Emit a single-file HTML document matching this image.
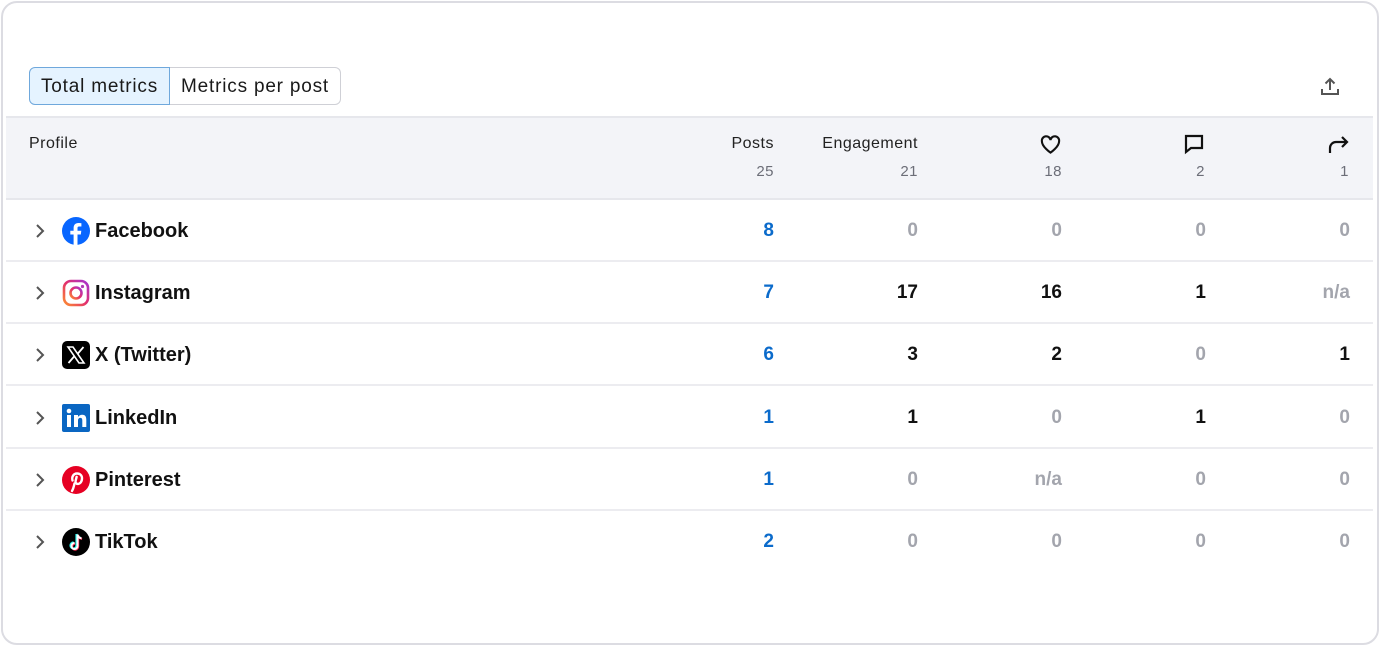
<!DOCTYPE html>
<html><head><style>
*{box-sizing:border-box;margin:0;padding:0}
body{width:1380px;height:646px;background:#fff;font-family:"Liberation Sans",sans-serif;position:relative;overflow:hidden}
.card{position:absolute;left:1px;top:1px;width:1378px;height:644px;border:2px solid #dcdce2;border-radius:16px}
.seg{position:absolute;top:67px;left:29px;height:38px;display:flex;font-size:19px;color:#1a1a1a;letter-spacing:0.8px}
.seg div{border:1px solid #cfd0d6;padding:0 11px;line-height:37px}
.seg .a{background:#e5f3ff;border-color:#6fa8dc;border-radius:6px 0 0 6px}
.seg .b{border-left:none;border-radius:0 6px 6px 0}
.hdr{position:absolute;left:6px;top:116px;width:1367px;height:84px;background:#f3f4f8;border-top:2px solid #e6e7ec;border-bottom:2px solid #e6e7ec}
.t{position:absolute;font-size:16px;color:#222;letter-spacing:0.5px}
.r{text-align:right}
.sub{font-size:15px;color:#6c6e78}
.row{position:absolute;left:6px;width:1367px;height:62px;border-bottom:2px solid #ececf0}
.name{position:absolute;left:89px;font-size:20px;font-weight:bold;color:#111;top:20px}
.chev{position:absolute;left:33px;top:23px}
.ic{position:absolute;left:56px;top:17px;width:28px;height:28px}
.v{position:absolute;top:20px;font-size:19px;font-weight:bold;text-align:right;width:60px}
.bl{color:#0b6bcb}.k{color:#111}.g{color:#a3a5ad}
</style></head><body>
<div class="card"></div>
<div class="seg"><div class="a">Total metrics</div><div class="b">Metrics per post</div></div>
<svg style="position:absolute;left:1319px;top:75px" width="22" height="22" viewBox="0 0 22 22" fill="none" stroke="#555" stroke-width="2"><path d="M11 15V4M6.5 8.5L11 4l4.5 4.5M3 14v5h16v-5"/></svg>
<div class="hdr"></div>
<div class="t" style="left:29px;top:135px">Profile</div>
<div class="t r" style="left:674px;width:100px;top:135px">Posts</div>
<div class="t r sub" style="left:674px;width:100px;top:163px">25</div>
<div class="t r" style="left:778px;width:140px;top:135px">Engagement</div>
<div class="t r sub" style="left:778px;width:140px;top:163px">21</div>
<svg style="position:absolute;left:1039px;top:133px" width="23" height="22" viewBox="0 0 24 22" fill="none" stroke="#111" stroke-width="2.2"><path d="M12 20S3 14 3 8a4.5 4.5 0 0 1 9-1 4.5 4.5 0 0 1 9 1c0 6-9 12-9 12z"/></svg>
<div class="t r sub" style="left:962px;width:100px;top:163px">18</div>
<svg style="position:absolute;left:1183px;top:133px" width="22" height="22" viewBox="0 0 22 22" fill="none" stroke="#111" stroke-width="2.2"><path d="M3 3h16v12H8l-5 4z"/></svg>
<div class="t r sub" style="left:1105px;width:100px;top:163px">2</div>
<svg style="position:absolute;left:1326px;top:133px" width="24" height="22" viewBox="0 0 24 22" fill="none" stroke="#111" stroke-width="2.2"><path d="M4 20v-5a6 6 0 0 1 6-6h11M16 4l5 5-5 5"/></svg>
<div class="t r sub" style="left:1249px;width:100px;top:163px">1</div>

<div class="row" style="top:200px"></div>
<div class="row" style="top:262px"></div>
<div class="row" style="top:324px"></div>
<div class="row" style="top:387px"></div>
<div class="row" style="top:449px"></div>
<div class="row" style="top:511px;border:none"></div>

<div style="position:absolute;top:200px;left:0;width:1380px;height:62px">
<svg class="chev" width="14" height="16" viewBox="0 0 14 16" fill="none" stroke="#555" stroke-width="2"><path d="M4 2l6 6-6 6"/></svg>
<svg class="ic" style="left:62px" viewBox="0 0 28 28"><circle cx="14" cy="14" r="14" fill="#0866ff"/><path d="M15.5 28V17.5h3.3l.5-3.8h-3.8v-2.4c0-1.1.3-1.8 1.900-1.8h2V6.2c-.4 0-1.6-.2-3-.2-2.9 0-4.8 1.8-4.8 5v2.7H8.3v3.8h3.3V28z" fill="#fff"/></svg>
<div class="name" style="left:95px">Facebook</div>
<div class="v bl" style="left:714px">8</div><div class="v g" style="left:858px">0</div><div class="v g" style="left:1002px">0</div><div class="v g" style="left:1146px">0</div><div class="v g" style="left:1290px">0</div>
</div>
<div style="position:absolute;top:262px;left:0;width:1380px;height:62px">
<svg class="chev" width="14" height="16" viewBox="0 0 14 16" fill="none" stroke="#555" stroke-width="2"><path d="M4 2l6 6-6 6"/></svg>
<svg class="ic" style="left:62px" viewBox="0 0 28 28"><defs><linearGradient id="ig" x1="0" y1="1" x2="1" y2="0"><stop offset="0" stop-color="#fd8d32"/><stop offset=".5" stop-color="#e3306c"/><stop offset="1" stop-color="#a534d3"/></linearGradient></defs><rect x="2" y="2" width="24" height="24" rx="7" fill="none" stroke="url(#ig)" stroke-width="2.6"/><circle cx="14" cy="14" r="5.5" fill="none" stroke="url(#ig)" stroke-width="2.6"/><circle cx="20.5" cy="7.5" r="1.6" fill="#b33ab8"/></svg>
<div class="name" style="left:95px">Instagram</div>
<div class="v bl" style="left:714px">7</div><div class="v k" style="left:858px">17</div><div class="v k" style="left:1002px">16</div><div class="v k" style="left:1146px">1</div><div class="v g" style="left:1290px">n/a</div>
</div>
<div style="position:absolute;top:324px;left:0;width:1380px;height:62px">
<svg class="chev" width="14" height="16" viewBox="0 0 14 16" fill="none" stroke="#555" stroke-width="2"><path d="M4 2l6 6-6 6"/></svg>
<svg class="ic" style="left:62px" viewBox="0 0 28 28"><rect width="28" height="28" rx="5" fill="#000"/><path d="M6 6h5l11 16h-5z" fill="none" stroke="#fff" stroke-width="1.6"/><path d="M21.5 6L15.5 13M6.5 22l6-7" stroke="#fff" stroke-width="1.8"/></svg>
<div class="name" style="left:95px">X (Twitter)</div>
<div class="v bl" style="left:714px">6</div><div class="v k" style="left:858px">3</div><div class="v k" style="left:1002px">2</div><div class="v g" style="left:1146px">0</div><div class="v k" style="left:1290px">1</div>
</div>
<div style="position:absolute;top:387px;left:0;width:1380px;height:62px">
<svg class="chev" width="14" height="16" viewBox="0 0 14 16" fill="none" stroke="#555" stroke-width="2"><path d="M4 2l6 6-6 6"/></svg>
<svg class="ic" style="left:62px" viewBox="0 0 28 28"><rect width="28" height="28" rx="2" fill="#0a66c2"/><rect x="5" y="11" width="4" height="12" fill="#fff"/><circle cx="7" cy="7" r="2.3" fill="#fff"/><path d="M12 11h4v2c1-1.5 2.4-2.3 4.3-2.3 3 0 4 2 4 5V23h-4v-6.5c0-1.6-.5-2.6-2-2.6s-2.3 1-2.3 2.6V23h-4z" fill="#fff"/></svg>
<div class="name" style="left:95px">LinkedIn</div>
<div class="v bl" style="left:714px">1</div><div class="v k" style="left:858px">1</div><div class="v g" style="left:1002px">0</div><div class="v k" style="left:1146px">1</div><div class="v g" style="left:1290px">0</div>
</div>
<div style="position:absolute;top:449px;left:0;width:1380px;height:62px">
<svg class="chev" width="14" height="16" viewBox="0 0 14 16" fill="none" stroke="#555" stroke-width="2"><path d="M4 2l6 6-6 6"/></svg>
<svg class="ic" style="left:62px" viewBox="0 0 28 28"><circle cx="14" cy="14" r="14" fill="#e60023"/><path d="M12.5 17.5c-.7 3.3-1.3 5.5-2.5 7.5M10.5 14.5c-1-3.5 1-7 4.5-7 3 0 5 2 5 4.8 0 3.2-1.8 5.6-4.2 5.6-1.6 0-2.6-1.3-2.2-3l1-4" fill="none" stroke="#fff" stroke-width="2.4" stroke-linecap="round"/></svg>
<div class="name" style="left:95px">Pinterest</div>
<div class="v bl" style="left:714px">1</div><div class="v g" style="left:858px">0</div><div class="v g" style="left:1002px">n/a</div><div class="v g" style="left:1146px">0</div><div class="v g" style="left:1290px">0</div>
</div>
<div style="position:absolute;top:511px;left:0;width:1380px;height:62px">
<svg class="chev" width="14" height="16" viewBox="0 0 14 16" fill="none" stroke="#555" stroke-width="2"><path d="M4 2l6 6-6 6"/></svg>
<svg class="ic" style="left:62px" viewBox="0 0 28 28"><circle cx="14" cy="14" r="14" fill="#000"/><path d="M15.5 6.5v11.5a3 3 0 1 1-3-3M15.5 6.5c.4 2.2 1.8 3.5 4 3.7" fill="none" stroke="#25f4ee" stroke-width="2.2" transform="translate(-1 -.5)"/><path d="M15.5 6.5v11.5a3 3 0 1 1-3-3M15.5 6.5c.4 2.2 1.8 3.5 4 3.7" fill="none" stroke="#fe2c55" stroke-width="2.2" transform="translate(.6 .6)"/><path d="M15.5 6.5v11.5a3 3 0 1 1-3-3M15.5 6.5c.4 2.2 1.8 3.5 4 3.7" fill="none" stroke="#fff" stroke-width="2"/></svg>
<div class="name" style="left:95px">TikTok</div>
<div class="v bl" style="left:714px">2</div><div class="v g" style="left:858px">0</div><div class="v g" style="left:1002px">0</div><div class="v g" style="left:1146px">0</div><div class="v g" style="left:1290px">0</div>
</div>
</body></html>
